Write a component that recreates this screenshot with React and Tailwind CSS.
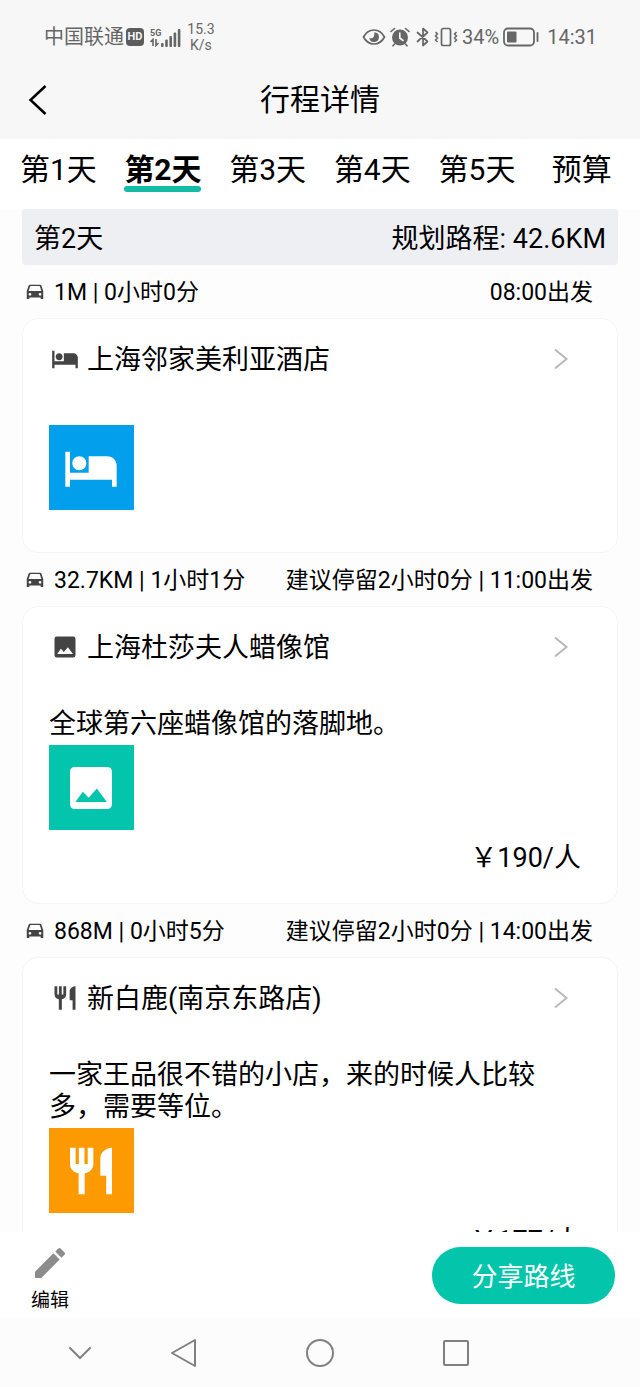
import React, { useState } from 'react';
import { MdEdit, MdLocalHotel } from 'react-icons/md';

const TABS = ['第1天', '第2天', '第3天', '第4天', '第5天', '预算'];

const PictureIcon = ({ className }) => (
  <svg viewBox="0 0 24 24" fill="currentColor" className={className}>
    <path
      fillRule="evenodd"
      d="M5 3h14a2 2 0 0 1 2 2v14a2 2 0 0 1-2 2H5a2 2 0 0 1-2-2V5a2 2 0 0 1 2-2zm.3 15h13.5l-4.3-5.8-3.5 4-2.5-2.6z"
    />
  </svg>
);

const FoodIcon = ({ className }) => (
  <svg viewBox="0 0 24 24" fill="currentColor" className={className}>
    <path d="M3 2h2.4v7h1.400V2h2.400v7h1.400V2H13v7c0 2.100-1.700 3.800-3.700 4v9H6.700v-9C4.700 12.800 3 11.100 3 9z" />
    <path d="M21 2c-2.800 0-5 2.200-5 4.500V14h2.500v8H21z" />
  </svg>
);

const CarIcon = ({ className }) => (
  <svg viewBox="0 0 24 24" fill="currentColor" className={className}>
    <path
      fillRule="evenodd"
      d="M6.500 4h11c.7 0 1.200.4 1.400 1L21 11v8.500h-2.800V18H5.800v1.500H3V11l2.100-6c.2-.6.7-1 1.400-1zm.4 1.500L5 11h14l-1.900-5.500zM6.500 13a1.500 1.500 0 1 0 0 3 1.500 1.500 0 0 0 0-3zm11 0a1.500 1.500 0 1 0 0 3 1.500 1.500 0 0 0 0-3z"
    />
  </svg>
);

const STOPS = [
  {
    distance: '1M | 0小时0分',
    departure: '08:00出发',
    name: '上海邻家美利亚酒店',
    icon: MdLocalHotel,
    tile: 'bg-[#02a0ec]'
  },
  {
    distance: '32.7KM | 1小时1分',
    departure: '建议停留2小时0分 | 11:00出发',
    name: '上海杜莎夫人蜡像馆',
    icon: PictureIcon,
    tile: 'bg-[#03c5ae]',
    description: '全球第六座蜡像馆的落脚地。',
    price: '￥190/人'
  },
  {
    distance: '868M | 0小时5分',
    departure: '建议停留2小时0分 | 14:00出发',
    name: '新白鹿(南京东路店)',
    icon: FoodIcon,
    tile: 'bg-[#fd9a01]',
    description: '一家王品很不错的小店，来的时候人比较多，需要等位。',
    price: '￥177/人'
  }
];

const StatusBar = () => (
  <div className="flex h-[74px] shrink-0 items-center justify-between pl-11 pr-[43px] text-xl text-[#666]">
    <div className="flex items-center">
      <span>中国联通</span>
      <span className="ml-0.5 flex h-[18px] w-[18px] items-center justify-center rounded bg-[#5c5c5c] text-[11px] font-bold text-[#f7f7f7]">
        HD
      </span>
      <div className="ml-1.5 flex items-end">
        <div className="flex flex-col items-start">
          <span className="text-[9px] font-bold leading-[10px]">5G</span>
          <svg viewBox="0 0 10 9" className="h-[9px] w-2.5" fill="none" stroke="currentColor" strokeWidth="1.6">
            <path d="M.5 4 3 1.5V8M6 1v6.5L8.5 5" />
          </svg>
        </div>
        <svg viewBox="0 0 20 19" className="h-[19px] w-5" fill="currentColor">
          <rect x="0" y="15" width="2.6" height="4" rx="1" />
          <rect x="4.2" y="11.5" width="2.6" height="7.5" rx="1" />
          <rect x="8.4" y="8" width="2.6" height="11" rx="1" />
          <rect x="12.6" y="4.5" width="2.6" height="14.5" rx="1" />
          <rect x="16.8" y="1" width="2.6" height="18" rx="1" />
        </svg>
      </div>
      <span className="ml-1.5 flex flex-col text-center text-sm leading-4">
        <span>15.3</span>
        <span>K/s</span>
      </span>
    </div>

    <div className="flex items-center">
      <svg viewBox="0 0 24 18" className="h-[18px] w-6" fill="none" stroke="currentColor" strokeWidth="1.7">
        <path d="M1.5 9C4 4.3 7.8 2 12 2s8 2.3 10.5 7C20 13.7 16.2 16 12 16S4 13.7 1.5 9z" />
        <path d="M12.3 4.2a4.9 4.9 0 1 1-5.1 5.6c1.2.9 2.8.7 3.9-.3 1.2-1.3 1.5-3.2 1.2-5.3z" fill="currentColor" stroke="none" />
      </svg>
      <svg viewBox="0 0 20 20" className="ml-1 h-5 w-5" fill="none" stroke="currentColor" strokeWidth="1.6" strokeLinecap="round">
        <circle cx="10" cy="10.5" r="8" fill="currentColor" stroke="none" />
        <path d="M1 4.5 4.5 1.5M19 4.5l-3.5-3M4.5 17 3 18.8M15.5 17l1.5 1.8" />
        <path d="M9.8 6v5l3.2 2.5" stroke="#f7f7f7" />
      </svg>
      <svg viewBox="0 0 14 20" className="ml-1.5 h-5 w-3.5" fill="none" stroke="currentColor" strokeWidth="1.7" strokeLinejoin="round" strokeLinecap="round">
        <path d="m1.5 5.5 10 9L7 18.5v-17l4.500 4-10 9" />
      </svg>
      <svg viewBox="0 0 24 20" className="ml-1 h-5 w-6" fill="none" stroke="currentColor" strokeWidth="1.7">
        <rect x="7.5" y="1.5" width="9" height="17" rx="1.8" />
        <path d="m1.5 5 2 2-2 2 2 2-2 2 2 2M22.5 5l-2 2 2 2-2 2 2 2-2 2" strokeWidth="1.5" />
      </svg>
      <span className="ml-1">34%</span>
      <svg viewBox="0 0 36 20" className="ml-1 h-5 w-9" fill="none" stroke="currentColor" strokeWidth="1.8">
        <rect x="1" y="1.5" width="30" height="17" rx="4" />
        <rect x="4" y="4.5" width="9.5" height="11" rx="1" fill="currentColor" stroke="none" />
        <path d="M34.5 6v8" strokeLinecap="round" />
      </svg>
      <span className="ml-2">14:31</span>
    </div>
  </div>
);

const StopCard = ({ stop }) => {
  const Icon = stop.icon;

  return (
    <li>
      <div className="flex h-[53px] items-center pl-0.5 pr-[25px] text-[23px]">
        <CarIcon className="mr-2 h-[22px] w-[22px] text-[#444]" />
        <span className="flex-1 pt-1">{stop.distance}</span>
        <span className="pt-1">{stop.departure}</span>
      </div>

      <article className="rounded-2xl border border-[#f5f5f5] bg-white px-[26px] pb-[42px]">
        <button type="button" className="flex h-[79px] w-full items-center text-left">
          <Icon className="ml-0.5 h-7 w-7 shrink-0 text-[#444]" />
          <h2 className="ml-2 flex-1 pt-1 text-[27px]">{stop.name}</h2>
          <svg viewBox="0 0 14 22" className="mr-[23px] h-[22px] w-3.5" fill="none" stroke="#b8b8b8" strokeWidth="2">
            <path d="m1 1.5 11.5 9.5L1 20.5" />
          </svg>
        </button>

        {stop.description && (
          <p className="mt-[22px] mb-[5px] max-w-[500px] text-[27px] leading-8">{stop.description}</p>
        )}
        <div className={`flex h-[85px] w-[85px] items-center justify-center pr-0.5 ${stop.tile} ${stop.description ? '' : 'mt-[27px]'}`}>
          <Icon className="h-14 w-14 text-white" />
        </div>
        {stop.price && (
          <p className="mt-3 h-[19px] pr-2.5 text-right text-[27px] leading-8">{stop.price}</p>
        )}
      </article>
    </li>
  );
};

export default function App() {
  const [activeTab, setActiveTab] = useState('第2天');

  return (
    <div className="flex h-screen flex-col bg-[#fdfdfd] font-[Roboto,'Noto_Sans_CJK_SC',sans-serif] text-black">
      <header className="shrink-0 bg-[#f7f7f7]">
        <StatusBar />
        <div className="grid h-[65px] grid-cols-[1fr_auto_1fr] items-start px-7 pt-1">
          <button type="button" aria-label="返回" className="flex h-11 w-11 items-center">
            <svg viewBox="0 0 20 32" className="h-8 w-5" fill="none" stroke="currentColor" strokeWidth="2.5">
              <path d="M17.5 2 2.5 16l15 14" />
            </svg>
          </button>
          <h1 className="text-[30px] leading-11">行程详情</h1>
        </div>
      </header>

      <nav className="grid shrink-0 grid-cols-6 bg-white px-1.5 pt-3.5 pb-[17px]">
        {TABS.map(tab => (
          <button
            key={tab}
            type="button"
            onClick={() => setActiveTab(tab)}
            className={`flex flex-col items-center text-[30px] leading-[33px] ${tab === activeTab ? 'font-bold' : ''}`}
          >
            {tab}
            <span className={`h-1.5 w-[77px] rounded-sm ${tab === activeTab ? 'bg-[#13bca5]' : ''}`} />
          </button>
        ))}
      </nav>

      <main className="min-h-0 flex-1 overflow-hidden px-[22px]">
        <div className="flex h-14 items-center justify-between rounded bg-[#eeeff3] px-3 pt-1 text-[27px]">
          <span>第2天</span>
          <span>规划路程: 42.6KM</span>
        </div>
        <ul>
          {STOPS.map(stop => (
            <StopCard key={stop.name} stop={stop} />
          ))}
        </ul>
      </main>

      <footer className="shrink-0">
        <div className="flex h-[86px] items-center justify-between bg-white pl-[30px] pr-[25px]">
          <button type="button" className="flex flex-col items-center pt-2 text-[19px] leading-7">
            <MdEdit className="mb-1 h-10 w-10 text-[#8c8c8c]" />
            编辑
          </button>
          <button type="button" className="h-[57px] w-[183px] rounded-full bg-[#03c5ab] pt-1 text-[26px] text-white">
            分享路线
          </button>
        </div>
        <div className="flex h-[69px] items-center justify-center gap-[104px] bg-[#fcfcfc] pr-[104px] text-[#808080]">
          <button type="button" aria-label="收起">
            <svg viewBox="0 0 32 32" className="h-8 w-8" fill="none" stroke="currentColor" strokeWidth="2" strokeLinecap="round">
              <path d="m6 11 10 10 10-10" />
            </svg>
          </button>
          <button type="button" aria-label="返回上页" className="-ml-8">
            <svg viewBox="0 0 32 32" className="h-8 w-8" fill="none" stroke="currentColor" strokeWidth="2" strokeLinejoin="round">
              <path d="M27 3v26L4 16z" />
            </svg>
          </button>
          <button type="button" aria-label="主页">
            <svg viewBox="0 0 32 32" className="h-8 w-8" fill="none" stroke="currentColor" strokeWidth="2">
              <circle cx="16" cy="16" r="13" />
            </svg>
          </button>
          <button type="button" aria-label="最近任务">
            <svg viewBox="0 0 32 32" className="h-8 w-8" fill="none" stroke="currentColor" strokeWidth="2">
              <rect x="4" y="4" width="24" height="24" rx="1" />
            </svg>
          </button>
        </div>
      </footer>
    </div>
  );
}
